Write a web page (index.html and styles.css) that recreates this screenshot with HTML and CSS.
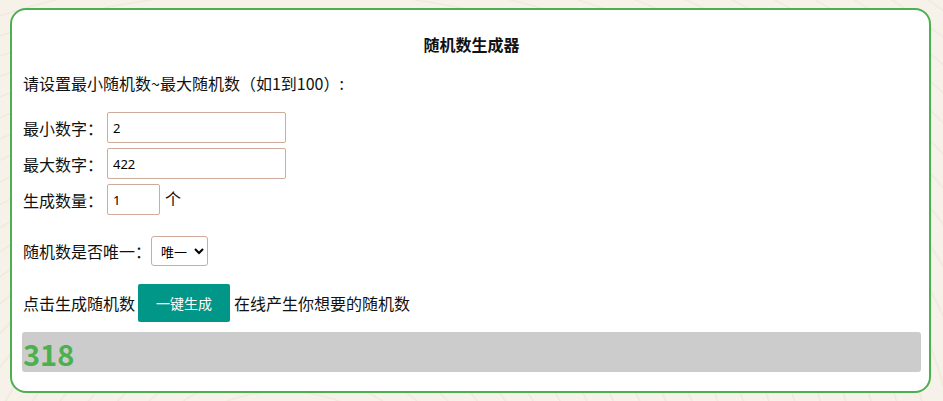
FILE: index.html
```html
<!DOCTYPE html>
<html>
	<head>
		<meta charset="utf-8">
		<title>随机数生成器</title>
		<link rel="stylesheet" href="styles.css">
	</head>
	<body>
		<div class="box">
			<h3 class="title">随机数生成器</h3>
			<p class="tip">请设置最小随机数~最大随机数（如1到100）:</p>
			<div class="form">
				<div class="row">
					<label>最小数字：</label>
					<input class="ipt" type="text" value="2">
				</div>
				<div class="row">
					<label>最大数字：</label>
					<input class="ipt" type="text" value="422">
				</div>
				<div class="row">
					<label>生成数量：</label>
					<input class="ipt short" type="text" value="1">
					<span class="unit">个</span>
				</div>
			</div>
			<div class="row only">
				<label>随机数是否唯一：</label>
				<select class="sel">
					<option>唯一</option>
					<option>不唯一</option>
				</select>
			</div>
			<div class="row act">
				<span>点击生成随机数</span>
				<button class="btn" type="button">一键生成</button>
				<span>在线产生你想要的随机数</span>
			</div>
			<div class="result">318</div>
		</div>
	</body>
</html>
```

FILE: styles.css
```css
*{
	padding: 0px;
	margin: 0px;
	box-sizing: border-box;
}
body{
	padding: 8px 12px 8px 10px;
	background-color: #f6f2e9;
	background-image: repeating-radial-gradient(ellipse at 30% 120%, transparent 0px, transparent 22px, #efe8da 23px, transparent 25px);
	font-family: "Noto Sans CJK SC", "Noto Sans", sans-serif;
	font-size: 16px;
	color: #111;
}
.box{
	background-color: #fff;
	border: 2px solid #4cb050;
	border-radius: 16px;
	padding: 22px 8px 19px 10px;
}
.title{
	text-align: center;
	font-size: 16px;
	font-weight: bold;
	line-height: 24px;
}
.tip{
	margin-top: 16px;
	line-height: 22px;
	padding-left: 1px;
}
.form{
	margin-top: 18px;
	display: flex;
	flex-direction: column;
	gap: 5px;
}
.row{
	display: flex;
	align-items: center;
	padding-left: 1px;
	line-height: 22px;
}
.row label{
	width: 84px;
}
.ipt{
	width: 179px;
	height: 31px;
	border: 1px solid #cfab9b;
	border-radius: 2px;
	padding: 0px 5px;
	font-family: "Noto Sans", sans-serif;
	font-size: 13px;
	color: #000;
	outline: none;
}
.ipt.short{
	width: 53px;
}
.unit{
	margin-left: 5px;
	margin-top: -3px;
}
.only{
	margin-top: 21px;
}
.only label{
	width: auto;
}
.sel{
	width: 57px;
	height: 30px;
	border: 1px solid #cfab9b;
	border-radius: 3px;
	padding-left: 5px;
	font-family: "Noto Sans CJK SC", sans-serif;
	font-size: 13px;
	background-color: #fff;
	color: #000;
}
.act{
	margin-top: 18px;
}
.btn{
	width: 92px;
	height: 38px;
	margin: 0px 4px 0px 3px;
	border: none;
	border-radius: 2px;
	background-color: #009688;
	color: #fff;
	font-family: "Noto Sans CJK SC", sans-serif;
	font-size: 14px;
}
.result{
	margin-top: 10px;
	height: 40px;
	background-color: #cccccc;
	border-radius: 3px;
	padding-left: 1px;
	font-family: "Noto Sans CJK SC", sans-serif;
	font-size: 29px;
	font-weight: bold;
	line-height: 42px;
	color: #4cb050;
}
```
